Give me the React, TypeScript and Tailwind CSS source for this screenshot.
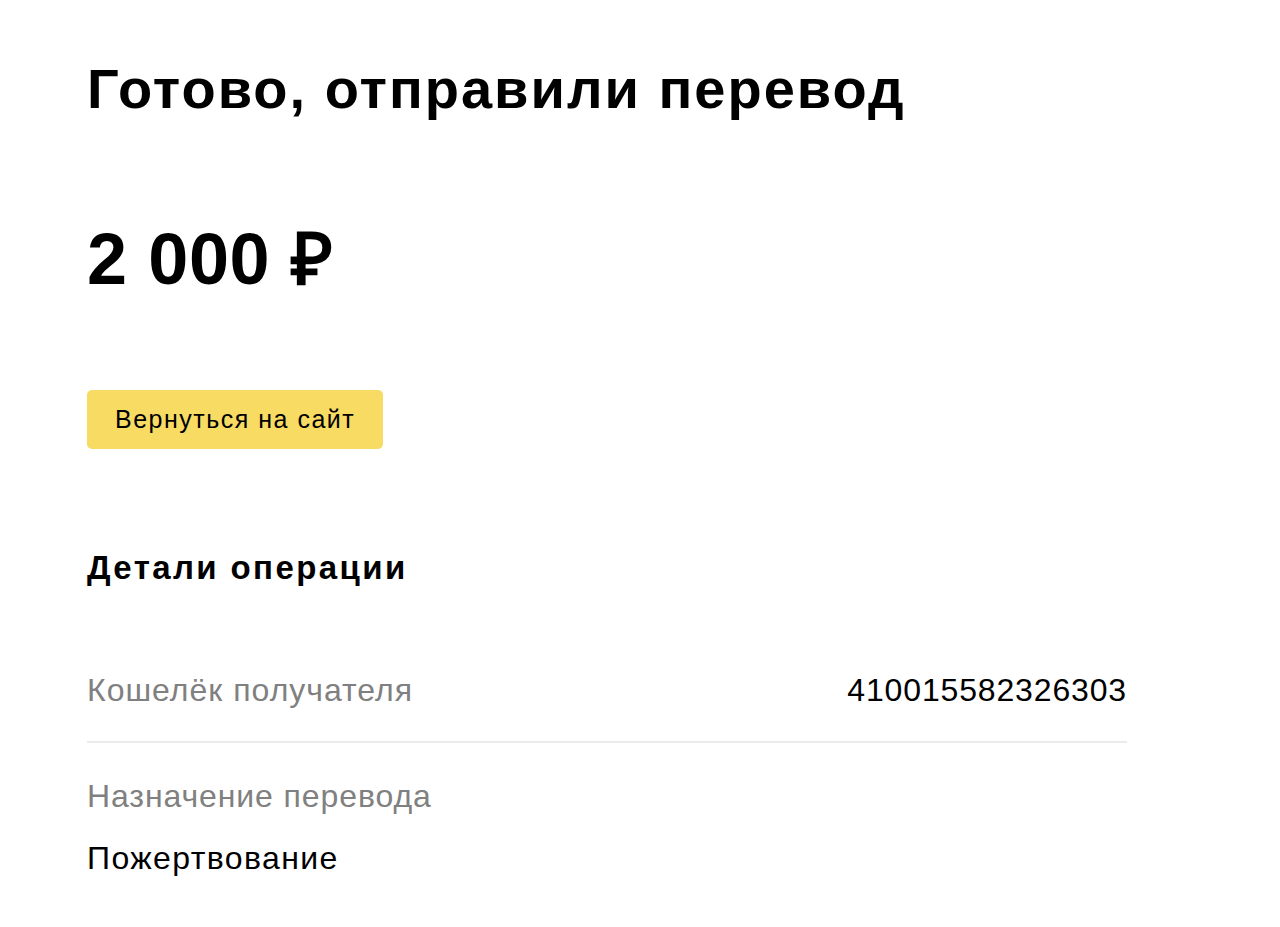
import React from 'react';

export default function App() {
  return (
    <div className="min-h-screen bg-white text-black" style={{ fontFamily: '"Liberation Sans", Arial, sans-serif' }}>
      <div className="px-[87px] pt-[61px] pb-16">
        <h1 className="text-[56px] leading-none font-bold tracking-[2px]">Готово, отправили перевод</h1>

        <div className="mt-[106px] text-[72px] leading-none font-bold tracking-[0.6px]">2 000 ₽</div>

        <button className="mt-[95px] h-[59px] px-7 rounded-[5px] bg-[#f8db62] text-[25px] leading-none tracking-[1.5px] text-black">
          Вернуться на сайт
        </button>

        <div className="w-[1040px]">
          <h2 className="mt-[102px] text-[33px] leading-none font-bold tracking-[2.4px]">Детали операции</h2>

          <div className="mt-[90px] flex items-center justify-between text-[32px] leading-none">
            <span className="text-[#808080] tracking-[1px]">Кошелёк получателя</span>
            <span className="tracking-[0.85px]">410015582326303</span>
          </div>

          <div className="mt-[35px] h-[2px] bg-[#ebebeb]" />

          <div className="mt-[37px] text-[32px] leading-none text-[#808080] tracking-[0.9px]">Назначение перевода</div>
          <div className="mt-[30px] text-[32px] leading-none tracking-[1.4px]">Пожертвование</div>
        </div>
      </div>
    </div>
  );
}
